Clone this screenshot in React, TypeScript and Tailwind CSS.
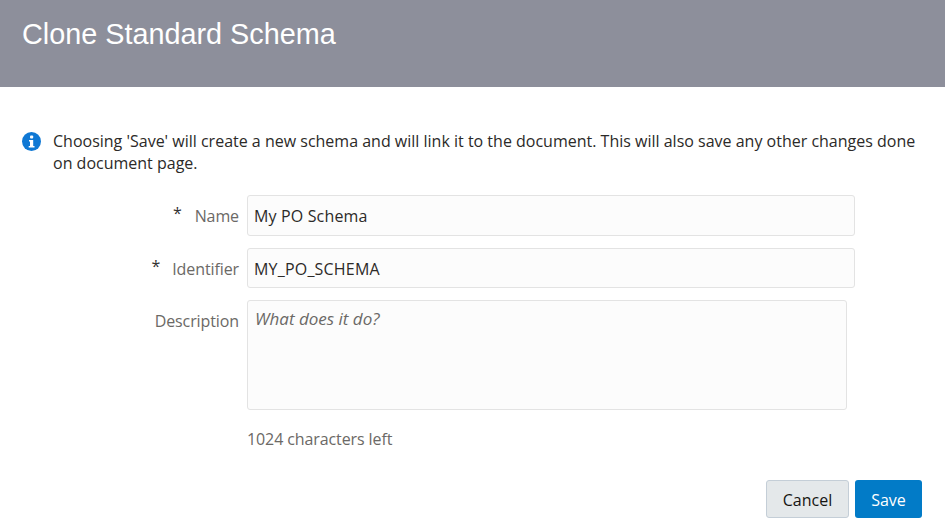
const sans = "font-['Open_Sans',sans-serif]";

function InfoIcon() {
  return (
    <svg width="19" height="19" viewBox="0 0 19 19" className="shrink-0 mt-[2px]">
      <circle cx="9.5" cy="9.5" r="9.5" fill="#0f78d4" />
      <rect x="8" y="3.500" width="3.200" height="3" rx="1" fill="#fff" />
      <path d="M7 8h4.200v6h1.300v1.600H6.700V14H8v-4.400H7z" fill="#fff" />
    </svg>
  );
}

function Row({
  label,
  required,
  starGap,
  children,
}: {
  label: string;
  required?: boolean;
  starGap?: string;
  children: React.ReactNode;
}) {
  return (
    <div className="flex items-start">
      <div className="w-[239px] shrink-0 flex justify-end items-start pt-[9px] text-[16px] leading-[24px] tracking-[-0.1px] text-[#6b6966]">
        {required && <span className={`${starGap} text-[#333] leading-[18px]`}>*</span>}
        <span>{label}</span>
      </div>
      <div className="ml-2">{children}</div>
    </div>
  );
}

export default function App() {
  return (
    <div className={`w-[945px] h-[526px] bg-white overflow-hidden ${sans}`}>
      <div className="h-[87px] bg-[#8d8f9b] pl-[22px] pt-[15px]">
        <h1 className="font-['Liberation_Sans',sans-serif] text-[28.8px] leading-[38px] text-white">
          Clone Standard Schema
        </h1>
      </div>

      <div className="flex gap-3 pl-[22px] pr-[20px] mt-[43px]">
        <InfoIcon />
        <p className="text-[16px] leading-[22px] text-[#2c2a28]">
          Choosing 'Save' will create a new schema and will link it to the document. This will also save any other changes done on document page.
        </p>
      </div>

      <div className="flex flex-col mt-[21px]">
        <Row label="Name" required starGap="mr-[13px]">
          <div className="w-[608px] h-[41px] flex items-center px-[6px] pt-px bg-[#fcfcfc] border border-[#e3e3e3] rounded-[3px] text-[16px] tracking-[0.15px] text-[#2c2a28]">
            My PO Schema
          </div>
        </Row>
        <div className="h-3" />
        <Row label="Identifier" required starGap="mr-[12px]">
          <div className="w-[608px] h-[40px] flex items-center px-[6px] pt-px bg-[#fcfcfc] border border-[#e3e3e3] rounded-[3px] text-[16px] tracking-[0.2px] text-[#2c2a28]">
            MY_PO_SCHEMA
          </div>
        </Row>
        <div className="h-3" />
        <Row label="Description">
          <div className="w-[600px] h-[110px] px-[7px] py-[6px] bg-[#fcfcfc] border border-[#e3e3e3] rounded-[3px] text-[17px] leading-[24px] italic text-[#6b6966]">
            What does it do?
          </div>
          <div className="mt-[18px] text-[16px] leading-[22px] tracking-[-0.1px] text-[#6b6966]">1024 characters left</div>
        </Row>
      </div>

      <div className="flex justify-end gap-[6px] pr-[23px] mt-[30px]">
        <button className="w-[83px] h-[38px] pt-px bg-[#e4e8ea] border border-[#c4ced7] rounded-[3px] text-[16px] text-[#161513]">
          Cancel
        </button>
        <button className="w-[67px] h-[38px] pt-px bg-[#027bc7] rounded-[3px] text-[16px] text-white">
          Save
        </button>
      </div>
    </div>
  );
}
